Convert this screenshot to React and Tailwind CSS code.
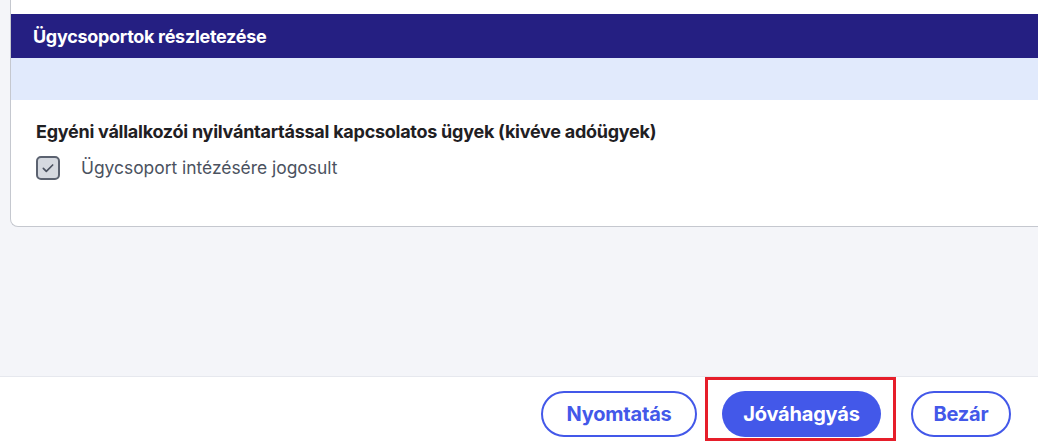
import React from "react";

function App() {
  return (
    <div className="h-[441px] w-full overflow-hidden bg-[#f4f5f9] flex flex-col font-['Inter','Noto_Sans',sans-serif]">
      <div className="h-[376px] shrink-0 pl-[10px]">
        <div className="bg-white border-l border-b border-[#c5c8cf] rounded-bl-lg pt-[14px] pb-[46px]">
          <div className="h-[44px] bg-[#251f82] flex items-center pl-[22px]">
            <p className="text-white font-bold text-[18px] tracking-[-0.3px]">Ügycsoportok részletezése</p>
          </div>
          <div className="h-[42px] bg-[#e1eafc]"></div>
          <div className="pl-[25px] pt-[20px]">
            <p className="text-[#1f2023] font-bold text-[18px] tracking-[-0.26px] leading-[24px]">
              Egyéni vállalkozói nyilvántartással kapcsolatos ügyek (kivéve adóügyek)
            </p>
            <div className="flex items-center gap-[21px] mt-[12px] h-6">
              <div className="w-6 h-6 rounded-[5px] bg-[#d5d9e0] border-2 border-[#5b6270] flex items-center justify-center">
                <svg width="16" height="16" viewBox="0 0 24 24" fill="none" stroke="#4b5260" strokeWidth="2.5" strokeLinecap="round" strokeLinejoin="round">
                  <path d="M5 12.5l4.5 4.5L19 7.5" />
                </svg>
              </div>
              <p className="text-[#4b5260] text-[17.4px] leading-6">Ügycsoport intézésére jogosult</p>
            </div>
          </div>
        </div>
      </div>
      <div className="flex-1 overflow-hidden bg-white border-t border-[#e6e8ee] flex justify-end items-start pr-[27px]">
        <button className="mt-[14px] h-[46px] w-[156px] shrink-0 rounded-full border-2 border-[#4358e9] text-[#4358e9] font-bold text-[20px] tracking-[-0.2px]">
          Nyomtatás
        </button>
        <div className="ml-[8px] h-[64px] shrink-0 border-[3px] border-[#e61e2a] pt-[11px] pl-[14px] pr-[12px]">
          <button className="h-[46px] w-[159px] rounded-full bg-[#4358e9] text-white font-bold text-[20px] tracking-[-0.2px]">
            Jóváhagyás
          </button>
        </div>
        <button className="ml-[15px] mt-[14px] h-[46px] w-[100px] shrink-0 rounded-full border-2 border-[#4358e9] text-[#4358e9] font-bold text-[20px] tracking-[-0.2px]">
          Bezár
        </button>
      </div>
    </div>
  );
}

export default App;
